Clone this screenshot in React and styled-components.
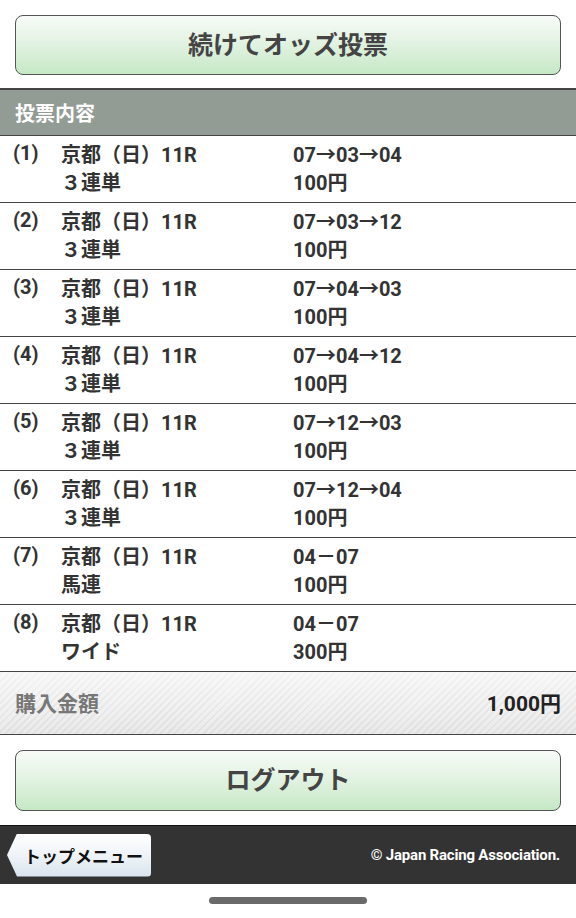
import React from 'react';
import styled, { createGlobalStyle } from 'styled-components';

const GlobalStyle = createGlobalStyle`
    html, body {
        margin: 0;
        padding: 0;
        background: #fff;
    }
    body {
        font-family: Roboto, "Noto Sans CJK JP", sans-serif;
        color: #333;
    }
`;

const Page = styled.div`
    width: 576px;
    min-height: 918px;
    display: flex;
    flex-direction: column;
    background: #fff;
`;

const ButtonWrap = styled.div`
    padding: ${props => props.padding};
`;

const GreenButton = styled.button`
    display: block;
    width: 100%;
    height: ${props => props.height}px;
    border: 1px solid #555;
    border-radius: 8px;
    background: linear-gradient(to bottom, #f7fbf7 0%, #e3f3e3 45%, #c6e8c6 100%);
    font-family: Roboto, "Noto Sans CJK JP", sans-serif;
    font-size: 25px;
    font-weight: 700;
    color: #444;
    cursor: pointer;
    padding: 0 0 5px;
`;

const SectionHeader = styled.div`
    margin-top: 13px;
    height: 45px;
    border-top: 2px solid #444;
    border-bottom: 1px solid #444;
    background: #939b95;
    display: flex;
    align-items: center;
    padding-left: 15px;
    font-size: 20px;
    font-weight: 700;
    color: #fff;
`;

const List = styled.ul`
    list-style: none;
    margin: 0;
    padding: 0;
`;

const Row = styled.li`
    display: grid;
    grid-template-columns: 48px 232px 1fr;
    grid-template-rows: 28px 28px;
    padding: 5px 0 5px 13px;
    border-bottom: 1px solid #444;
    font-size: 20px;
    font-weight: 700;
    line-height: 28px;
    color: #333;
`;

const Num = styled.span`
    font-size: 20px;
    line-height: 24px;
`;

const Cell = styled.span`
    white-space: nowrap;
`;

const TotalRow = styled.div`
    height: 63px;
    box-sizing: border-box;
    padding: 0 15px 3px;
    border-bottom: 1px solid #444;
    display: flex;
    align-items: center;
    justify-content: space-between;
    background:
        linear-gradient(to bottom, rgba(255,255,255,0.55), rgba(255,255,255,0) 60%, rgba(0,0,0,0.03)),
        repeating-linear-gradient(-45deg, #f1f1f1 0px, #f1f1f1 3px, #e7e7e7 3px, #e7e7e7 5px);
`;

const TotalLabel = styled.span`
    font-size: 21px;
    font-weight: 700;
    color: #777;
`;

const TotalValue = styled.span`
    font-size: 21px;
    font-weight: 700;
    color: #222;
`;

const Footer = styled.footer`
    margin-top: 14px;
    height: 58px;
    border-top: 1px solid #111;
    background: #333;
    display: flex;
    align-items: center;
    justify-content: space-between;
    padding: 0 16px 0 7px;
`;

const TopMenuButton = styled.a`
    display: flex;
    align-items: center;
    height: 43px;
    width: 144px;
    box-sizing: border-box;
    padding-left: 17px;
    border-radius: 0 4px 4px 0;
    clip-path: polygon(10px 0, 100% 0, 100% 100%, 10px 100%, 0 50%);
    background: linear-gradient(to bottom, #ffffff 0%, #eef3f8 50%, #d9e4ee 100%);
    font-size: 17px;
    font-weight: 700;
    color: #111;
    text-decoration: none;
    cursor: pointer;
`;

const Copyright = styled.span`
    font-size: 15px;
    font-weight: 700;
    color: #fff;
    letter-spacing: -0.2px;
`;

const HomeBar = styled.div`
    display: flex;
    justify-content: center;
    padding-top: 13px;

    &::after {
        content: "";
        width: 158px;
        height: 7px;
        border-radius: 4px;
        background: #6a6a6a;
    }
`;

const bets = [
    { type: '３連単', combo: '07→03→04', amount: '100円' },
    { type: '３連単', combo: '07→03→12', amount: '100円' },
    { type: '３連単', combo: '07→04→03', amount: '100円' },
    { type: '３連単', combo: '07→04→12', amount: '100円' },
    { type: '３連単', combo: '07→12→03', amount: '100円' },
    { type: '３連単', combo: '07→12→04', amount: '100円' },
    { type: '馬連', combo: '04－07', amount: '100円' },
    { type: 'ワイド', combo: '04－07', amount: '300円' },
];

const App = () => (
    <Page>
        <GlobalStyle />
        <ButtonWrap padding="15px 15px 0">
            <GreenButton height={60}>続けてオッズ投票</GreenButton>
        </ButtonWrap>

        <SectionHeader>投票内容</SectionHeader>
        <List>
            {bets.map((bet, i) => (
                <Row key={i}>
                    <Num>({i + 1})</Num>
                    <Cell>京都（日）11R</Cell>
                    <Cell>{bet.combo}</Cell>
                    <span />
                    <Cell>{bet.type}</Cell>
                    <Cell>{bet.amount}</Cell>
                </Row>
            ))}
        </List>

        <TotalRow>
            <TotalLabel>購入金額</TotalLabel>
            <TotalValue>1,000円</TotalValue>
        </TotalRow>

        <ButtonWrap padding="15px 15px 0">
            <GreenButton height={61}>ログアウト</GreenButton>
        </ButtonWrap>

        <Footer>
            <TopMenuButton>トップメニュー</TopMenuButton>
            <Copyright>© Japan Racing Association.</Copyright>
        </Footer>
        <HomeBar />
    </Page>
);

export default App;
